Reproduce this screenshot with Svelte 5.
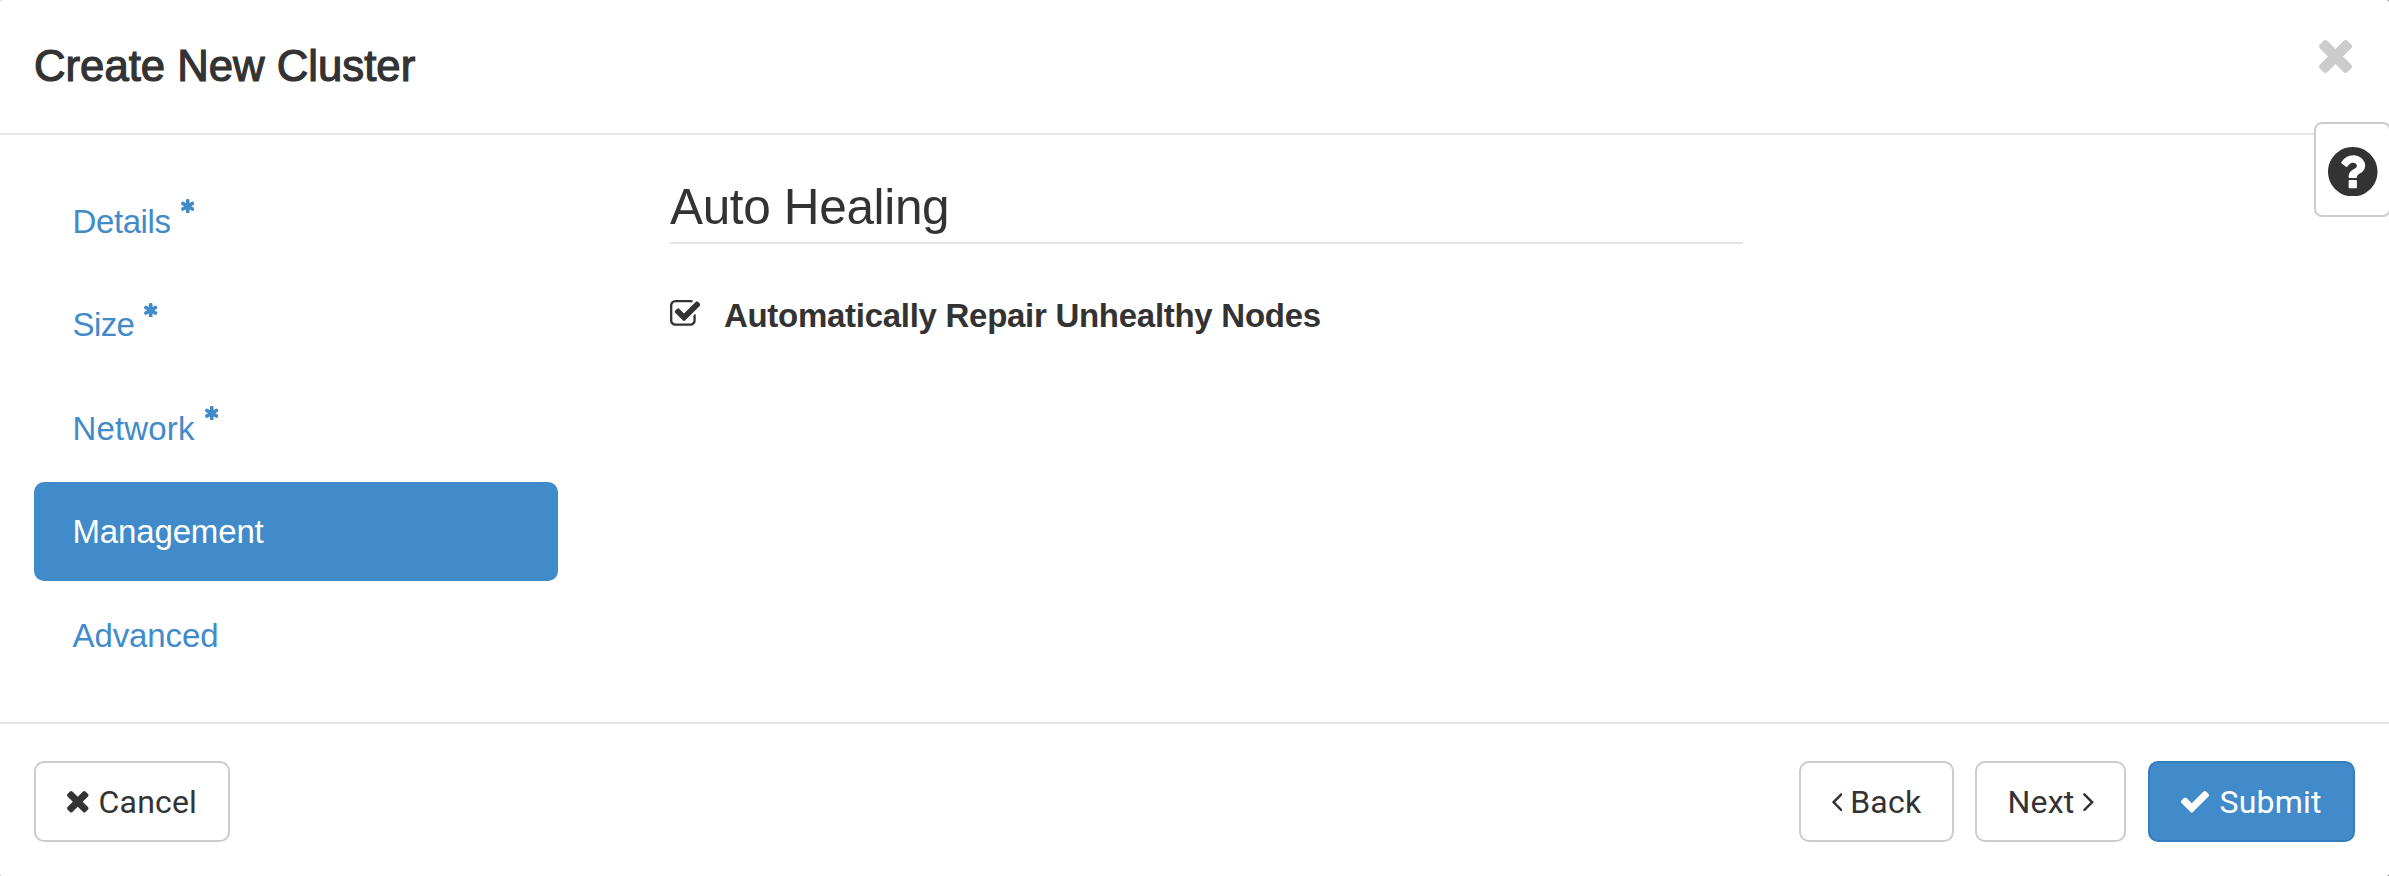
<script>
  const steps = [
    { label: 'Details', required: true, tracking: -0.4 },
    { label: 'Size', required: true, tracking: -0.6 },
    { label: 'Network', required: true, tracking: 0.15 },
    { label: 'Management', required: false, tracking: -0.15 },
    { label: 'Advanced', required: false, tracking: -0.1 }
  ];
  let active = $state('Management');
  let repair = $state(true);

  // Glyph outlines use a y-up grid; each entry holds [x, y, width, height, path].
  const glyphs = {
    times: [110, -18, 1188, 1188, 'M1298 214q0 -40 -28 -68l-136 -136q-28 -28 -68 -28t-68 28l-294 294l-294 -294q-28 -28 -68 -28t-68 28l-136 136q-28 28 -28 68t28 68l294 294l-294 294q-28 28 -28 68t28 68l136 136q28 28 68 28t68 -28l294 -294l294 294q28 28 68 28t68 -28l136 -136q28 -28 28 -68t-28 -68l-294 -294l294 -294q28 -28 28 -68z'],
    check: [121, 14, 1550, 1188, 'M1671 970q0 -40 -28 -68l-724 -724l-136 -136q-28 -28 -68 -28t-68 28l-136 136l-362 362q-28 28 -28 68t28 68l136 136q28 28 68 28t68 -28l294 -295l656 657q28 28 68 28t68 -28l136 -136q28 -28 28 -68z'],
    asterisk: [122, -128, 1420, 1536, 'M1482 486q46 -26 59.5 -77.5t-12.5 -97.5l-64 -110q-26 -46 -77.5 -59.5t-97.5 12.5l-266 153v-307q0 -52 -38 -90t-90 -38h-128q-52 0 -90 38t-38 90v307l-266 -153q-46 -26 -97.5 -12.5t-77.5 59.5l-64 110q-26 46 -12.5 97.5t59.5 77.5l266 154l-266 154q-46 26 -59.5 77.5t12.5 97.5l64 110q26 46 77.5 59.5t97.5 -12.5l266 -153v307q0 52 38 90t90 38h128q52 0 90 -38t38 -90v-307l266 153q46 26 97.5 12.5t77.5 -59.5l64 -110q26 -46 12.5 -97.5t-59.5 -77.5l-266 -154z'],
    checkSquare: [0, 0, 1663, 1408, 'M1408 606v-318q0 -119 -84.5 -203.5t-203.5 -84.5h-832q-119 0 -203.5 84.5t-84.5 203.5v832q0 119 84.5 203.5t203.5 84.5h832q63 0 117 -25q15 -7 18 -23q3 -17 -9 -29l-49 -49q-10 -10 -23 -10q-3 0 -9 2q-23 6 -45 6h-832q-66 0 -113 -47t-47 -113v-832q0 -66 47 -113t113 -47h832q66 0 113 47t47 113v254q0 13 9 22l64 64q10 10 23 10q6 0 12 -3q20 -8 20 -29zM1639 1095l-814 -814q-24 -24 -57 -24t-57 24l-430 430q-24 24 -24 57t24 57l110 110q24 24 57 24t57 -24l263 -263l647 647q24 24 57 24t57 -24l110 -110q24 -24 24 -57t-24 -57z'],
    square: [0, 0, 1663, 1408, 'M1120 1280h-832q-66 0 -113 -47t-47 -113v-832q0 -66 47 -113t113 -47h832q66 0 113 47t47 113v832q0 66 -47 113t-113 47zM1408 1120v-832q0 -119 -84.5 -203.5t-203.5 -84.5h-832q-119 0 -203.5 84.5t-84.5 203.5v832q0 119 84.5 203.5t203.5 84.5h832q119 0 203.5 -84.5t84.5 -203.5z'],
    question: [0, -128, 1536, 1536, 'M896 160v192q0 14 -9 23t-23 9h-192q-14 0 -23 -9t-9 -23v-192q0 -14 9 -23t23 -9h192q14 0 23 9t9 23zM1152 832q0 88 -55.5 163t-138.5 116t-170 41q-243 0 -371 -213q-15 -24 8 -42l132 -100q7 -6 19 -6q16 0 25 12q53 68 86 92q34 24 86 24q48 0 85.5 -26t37.5 -59q0 -38 -20 -61t-68 -45q-63 -28 -115.5 -86.5t-52.5 -125.5v-36q0 -14 9 -23t23 -9h192q14 0 23 9t9 23q0 19 21.5 49.5t54.5 49.5q32 18 49 28.5t46 35t44.5 48t28 60.5t12.5 81zM1536 640q0 -209 -103 -385.5t-279.5 -279.5t-385.5 -103t-385.5 103t-279.5 279.5t-103 385.5t103 385.5t279.5 279.5t385.5 103t385.5 -103t279.5 -279.5t103 -385.5z'],
    angleLeft: [45, 77, 582, 998, 'M627 992q0 -13 -10 -23l-393 -393l393 -393q10 -10 10 -23t-10 -23l-50 -50q-10 -10 -23 -10t-23 10l-466 466q-10 10 -10 23t10 23l466 466q10 10 23 10t23 -10l50 -50q10 -10 10 -23z'],
    angleRight: [13, 77, 582, 998, 'M595 576q0 -13 -10 -23l-466 -466q-10 -10 -23 -10t-23 10l-50 50q-10 10 -10 23t10 23l393 393l-393 393q-10 10 -10 23t10 23l50 50q10 10 23 10t23 -10l466 -466q10 -10 10 -23z']
  };
</script>

{#snippet icon(name, width)}
  {@const [x, y, w, h, d] = glyphs[name]}
  <svg class="icon" {width} height={(width * h) / w} viewBox="{x} {-(y + h)} {w} {h}" aria-hidden="true">
    <path transform="scale(1 -1)" fill="currentColor" fill-rule="evenodd" {d} />
  </svg>
{/snippet}

<div class="dialog" role="dialog" aria-labelledby="title">
  <header>
    <h1 id="title">Create New Cluster</h1>
    <button class="close" aria-label="Close">{@render icon('times', 33)}</button>
  </header>

  <button class="help" aria-label="Help">{@render icon('question', 49.5)}</button>

  <main>
    <nav>
      {#each steps as step}
        <button class="step" class:active={active === step.label} onclick={() => (active = step.label)}>
          <span style:letter-spacing="{step.tracking}px">{step.label}</span>
          {#if step.required}<span class="required">{@render icon('asterisk', 13.4)}</span>{/if}
        </button>
      {/each}
    </nav>
    <section>
      <h2>Auto Healing</h2>
      <button class="option" role="checkbox" aria-checked={repair} onclick={() => (repair = !repair)}>
        <span class="box">{@render icon(repair ? 'checkSquare' : 'square', 30.4)}</span>
        <span>Automatically Repair Unhealthy Nodes</span>
      </button>
    </section>
  </main>

  <footer>
    <button class="btn cancel">{@render icon('times', 21.5)}Cancel</button>
    <button class="btn back">{@render icon('angleLeft', 10.7)}Back</button>
    <button class="btn next">Next{@render icon('angleRight', 10.7)}</button>
    <button class="btn submit">{@render icon('check', 28)}Submit</button>
  </footer>
</div>

<style>
  :global(body) {
    margin: 0;
    background: linear-gradient(to right, #bbb, #444);
    overflow: hidden;
  }
  .dialog {
    position: relative;
    display: flex;
    flex-direction: column;
    box-sizing: border-box;
    height: 876px;
    overflow: hidden;
    background: #fff;
    border-radius: 2px;
    color: #333;
    font-family: "Liberation Sans", Arial, sans-serif;
  }
  button {
    margin: 0;
    padding: 0;
    border: 0;
    background: none;
    color: inherit;
    font: inherit;
    text-align: left;
    cursor: pointer;
  }
  .icon {
    display: block;
    flex: none;
  }
  header {
    display: flex;
    justify-content: space-between;
    align-items: flex-start;
    box-sizing: border-box;
    height: 135px;
    padding: 36px 37px 0 34px;
    border-bottom: 2px solid #e5e5e5;
  }
  h1 {
    margin: 0;
    font-size: 43.7px;
    line-height: 60px;
    font-weight: 400;
    letter-spacing: 0;
    -webkit-text-stroke: 1.2px #333;
  }
  .close {
    margin-top: 4px;
    color: #ccc;
  }
  .help {
    position: absolute;
    top: 122px;
    left: 2314px;
    display: flex;
    align-items: center;
    box-sizing: border-box;
    width: 77px;
    height: 95px;
    padding: 4px 0 0 12px;
    border: 2px solid #ccc;
    border-radius: 8px;
    background: #fff;
  }
  main {
    flex: 1;
    display: flex;
    gap: 112px;
    padding: 0 34px;
  }
  nav {
    display: flex;
    flex-direction: column;
    gap: 4.5px;
    width: 524px;
    padding-top: 36.5px;
  }
  .step {
    display: flex;
    flex: none;
    gap: 10px;
    height: 99px;
    padding-left: 38.5px;
    border-radius: 10px;
    color: #428bca;
    font-size: 33px;
    line-height: 99px;
  }
  .step.active {
    background: #428bca;
    color: #fff;
  }
  .required {
    padding-top: 27.5px;
  }
  section {
    width: 1073px;
    padding-top: 45px;
  }
  h2 {
    margin: 0 0 51px;
    padding-bottom: 8px;
    border-bottom: 2px solid #e5e5e5;
    font-size: 49.5px;
    line-height: 54px;
    font-weight: 400;
    letter-spacing: -0.35px;
  }
  .option {
    display: flex;
    gap: 23.5px;
    font-size: 33px;
    line-height: 42px;
    font-weight: 700;
    letter-spacing: -0.28px;
  }
  .box {
    padding-top: 5px;
  }
  footer {
    display: flex;
    align-items: flex-start;
    box-sizing: border-box;
    height: 154px;
    padding: 37px 34px 0;
    border-top: 2px solid #e5e5e5;
    font-family: Roboto, sans-serif;
    font-size: 32px;
    letter-spacing: 0.2px;
  }
  .btn {
    display: flex;
    align-items: center;
    box-sizing: border-box;
    height: 81px;
    border: 2px solid #ccc;
    border-radius: 10px;
    background: #fff;
    letter-spacing: inherit;
  }
  .btn .icon {
    margin-top: 1px;
  }
  .cancel {
    gap: 10px;
    width: 196px;
    padding-left: 31px;
    margin-right: auto;
  }
  .back {
    gap: 8px;
    width: 155px;
    padding-left: 30.5px;
    margin-right: 21px;
  }
  .next {
    gap: 8.5px;
    width: 151px;
    padding-left: 30.5px;
    margin-right: 22px;
  }
  .submit {
    gap: 10.5px;
    width: 207px;
    padding-left: 31px;
    border-color: #357ebd;
    background: #428bca;
    color: #fff;
  }
</style>
